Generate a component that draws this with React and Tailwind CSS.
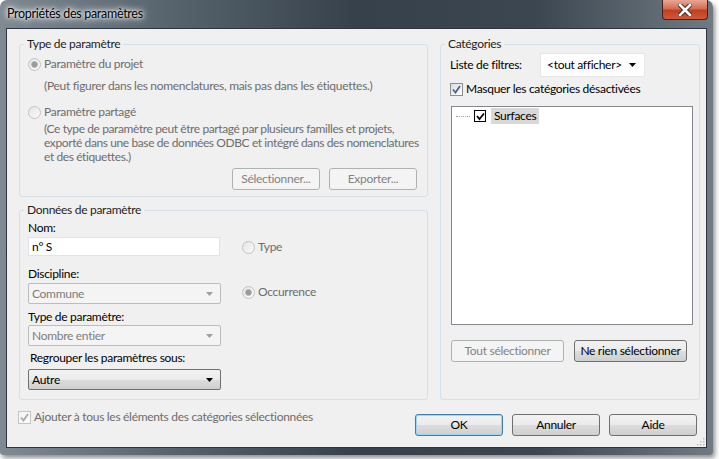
import React from 'react';

const font = "font-['Lato',sans-serif] text-[12px] tracking-[-0.3px] whitespace-nowrap";

function Radio({ checked }) {
    return (
        <svg width="13" height="13" viewBox="0 0 13 13" className="shrink-0">
            <defs>
                <linearGradient id="rg" x1="0" y1="0" x2="1" y2="1">
                    <stop offset="0" stopColor="#e4e4e4" />
                    <stop offset="1" stopColor="#fbfbfb" />
                </linearGradient>
            </defs>
            <circle cx="6.5" cy="6.5" r="6" fill="url(#rg)" stroke="#c2c2c2" />
            {checked && <circle cx="6.5" cy="6.5" r="3" fill="#9a9a9a" stroke="#b0b0b0" strokeWidth="0.6" />}
        </svg>
    );
}

function Check({ disabled }) {
    return (
        <span className={`w-[13px] h-[13px] shrink-0 border flex items-center justify-center bg-gradient-to-br ${disabled ? 'border-[#c4c4c4] from-[#f4f4f4] to-[#fbfbfb]' : 'border-[#8e8f8f] from-[#dcdcdc] to-[#ffffff]'}`}>
            <svg width="9" height="9" viewBox="0 0 9 9">
                <path d="M1 4.5 L3.5 7.5 L8 1" fill="none" stroke={disabled ? '#a8a8a8' : '#4a6294'} strokeWidth="1.8" />
            </svg>
        </span>
    );
}

function Arrow({ color }) {
    return (
        <svg width="7" height="4" viewBox="0 0 7 4" className="shrink-0">
            <path d="M0 0 H7 L3.5 4 Z" fill={color} />
        </svg>
    );
}

function Button({ children, w, disabled, focused }) {
    return (
        <div
            className={`h-[22px] ${w} rounded-[3px] border flex items-center justify-center ${
                disabled
                    ? 'border-[#adb2b5] bg-[#f4f4f4] text-[#838383]'
                    : focused
                    ? 'border-[#3c7fb1] bg-[linear-gradient(#f2f2f2_0%,#ebebeb_50%,#dddddd_50%,#cfcfcf_100%)] shadow-[inset_0_0_0_1px_#9ed4f5] text-black'
                    : 'border-[#707070] bg-[linear-gradient(#f2f2f2_0%,#ebebeb_50%,#dddddd_50%,#cfcfcf_100%)] text-black'
            }`}
        >
            {children}
        </div>
    );
}

function Select({ value, disabled }) {
    return (
        <div
            className={`w-[193px] h-[21px] rounded-[2px] border flex items-center justify-between pl-[3px] pr-[7px] ${
                disabled
                    ? 'border-[#bcbcbc] bg-[#f4f4f4] text-[#7d7d7d]'
                    : 'border-[#707070] bg-[linear-gradient(#f2f2f2_0%,#ebebeb_50%,#dddddd_50%,#cfcfcf_100%)] text-black'
            }`}
        >
            <span>{value}</span>
            <Arrow color={disabled ? '#a0a0a0' : '#000'} />
        </div>
    );
}

function Group({ title, className, children }) {
    return (
        <fieldset className={`min-w-0 border border-[#d5dfe5] rounded-[3px] ${className}`}>
            <legend className="ml-[4px] px-[3px] leading-[16px] text-[#1e1e1e]">{title}</legend>
            {children}
        </fieldset>
    );
}

export default function App() {
    return (
        <div className={`w-[719px] h-[459px] bg-white ${font}`}>
            <div className="w-[713px] h-[455px] rounded-t-[7px] rounded-b-[3px] bg-[linear-gradient(90deg,#7f8a93_0%,#55616b_25%,#36414b_50%,#3b4650_75%,#6f7a83_100%)] shadow-[2px_3px_5px_rgba(0,0,0,0.45)] flex flex-col">
                {/* Title bar */}
                <div className="h-[28px] flex items-start justify-between pl-[7px] pr-[5px]">
                    <span className="mt-[6px] text-[12.5px] leading-[16px] text-black [text-shadow:0_0_6px_#fff,0_0_10px_#fff,0_0_3px_#fff]">
                        Propriétés des paramètres
                    </span>
                    <div className="w-[46px] h-[20px] rounded-b-[4px] border border-t-0 border-[#4a2018] bg-[linear-gradient(#e9a795_0%,#d46c55_45%,#c0401f_55%,#d2583a_100%)] flex items-center justify-center">
                        <svg width="14" height="12" viewBox="0 0 14 12">
                            <path d="M2 1 L12 11 M12 1 L2 11" stroke="#3a2a2a" strokeWidth="4.5" strokeLinecap="square" />
                            <path d="M2 1 L12 11 M12 1 L2 11" stroke="#fff" strokeWidth="2.6" strokeLinecap="square" />
                        </svg>
                    </div>
                </div>

                {/* Client area */}
                <div className="mx-[6px] w-[701px] h-[420px] border border-[#2c3640] bg-[#f0f0f0] pl-[12px] pr-[6px] pt-[7px] relative">
                    <div className="flex gap-[12px]">
                        {/* Left column */}
                        <div className="w-[409px] flex flex-col gap-[5px]">
                            <Group title="Type de paramètre" className="h-[161px]">
                                <div className="mt-[4px] pl-[8px] h-[16px] flex items-center gap-[3px] text-[#6d6d6d]">
                                    <Radio checked />
                                    <span>Paramètre du projet</span>
                                </div>
                                <div className="mt-[6px] pl-[24px] leading-[16px] text-[#6d6d6d]">
                                    (Peut figurer dans les nomenclatures, mais pas dans les étiquettes.)
                                </div>
                                <div className="mt-[10px] pl-[8px] h-[16px] flex items-center gap-[3px] text-[#6d6d6d]">
                                    <Radio />
                                    <span>Paramètre partagé</span>
                                </div>
                                <div className="mt-[2px] pl-[24px] leading-[14px] tracking-[-0.4px] text-[#6d6d6d]">
                                    <div>(Ce type de paramètre peut être partagé par plusieurs familles et projets,</div>
                                    <div>exporté dans une base de données ODBC et intégré dans des nomenclatures</div>
                                    <div>et des étiquettes.)</div>
                                </div>
                                <div className="mt-[4px] pr-[10px] flex justify-end gap-[9px]">
                                    <Button w="w-[88px]" disabled>Sélectionner...</Button>
                                    <Button w="w-[88px]" disabled>Exporter...</Button>
                                </div>
                            </Group>

                            <Group title="Données de paramètre" className="h-[198px]">
                                <div className="flex">
                                    <div className="pl-[8px] w-[222px] flex flex-col">
                                        <div className="mt-[2px] leading-[16px]">Nom:</div>
                                        <div className="mt-[1px] w-[192px] h-[19px] bg-white border border-[#e2e3ea] flex items-center pl-[3px] text-black">
                                            n° S
                                        </div>
                                        <div className="mt-[10px] leading-[16px]">Discipline:</div>
                                        <div className="mt-[1px]">
                                            <Select value="Commune" disabled />
                                        </div>
                                        <div className="mt-[5px] leading-[16px]">Type de paramètre:</div>
                                        <Select value="Nombre entier" disabled />
                                        <div className="mt-[4px] pl-[2px] leading-[16px]">Regrouper les paramètres sous:</div>
                                        <div className="mt-[3px]">
                                            <Select value="Autre" />
                                        </div>
                                    </div>
                                    <div className="flex flex-col">
                                        <div className="mt-[21px] h-[16px] flex items-center gap-[3px] text-[#6d6d6d]">
                                            <Radio />
                                            <span>Type</span>
                                        </div>
                                        <div className="mt-[29px] h-[16px] flex items-center gap-[3px] text-[#6d6d6d]">
                                            <Radio checked />
                                            <span>Occurrence</span>
                                        </div>
                                    </div>
                                </div>
                            </Group>
                        </div>

                        {/* Right column */}
                        <Group title="Catégories" className="w-[260px] h-[364px]">
                            <div className="mt-[1px] pl-[9px] h-[24px] flex items-center">
                                <span className="w-[90px]">Liste de filtres:</span>
                                <div className="w-[105px] h-[24px] bg-white border border-[#e6e6e6] flex items-center justify-between pl-[6px] pr-[8px]">
                                    <span>&lt;tout afficher&gt;</span>
                                    <Arrow color="#000" />
                                </div>
                            </div>
                            <div className="mt-[4px] pl-[9px] h-[16px] flex items-center gap-[3px]">
                                <Check />
                                <span>Masquer les catégories désactivées</span>
                            </div>
                            <div className="mt-[9px] ml-[10px] w-[242px] h-[219px] bg-white border border-[#828790] pt-[1px]">
                                <div className="flex items-center h-[16px] pl-[4px]">
                                    <span className="w-[14px] border-t border-dotted border-[#a0a0a0] mr-[4px]" />
                                    <span className="w-[12px] h-[12px] border border-black bg-white flex items-center justify-center">
                                        <svg width="9" height="9" viewBox="0 0 9 9">
                                            <path d="M1 4 L3.5 7 L8 1.5" fill="none" stroke="#000" strokeWidth="1.8" />
                                        </svg>
                                    </span>
                                    <span className="ml-[5px] px-[3px] h-[16px] leading-[16px] bg-[#d9d9d9]">Surfaces</span>
                                </div>
                            </div>
                            <div className="mt-[15px] ml-[10px] flex gap-[10px]">
                                <Button w="w-[113px]" disabled>Tout sélectionner</Button>
                                <Button w="w-[113px]">Ne rien sélectionner</Button>
                            </div>
                        </Group>
                    </div>

                    {/* Bottom row */}
                    <div className="flex justify-between pr-[3px]">
                        <div className="mt-[9px] -ml-[1px] h-[16px] flex items-center gap-[3px] text-[#6d6d6d]">
                            <Check disabled />
                            <span>Ajouter à tous les éléments des catégories sélectionnées</span>
                        </div>
                        <div className="mt-[14px] flex gap-[9px]">
                            <Button w="w-[88px]" focused>OK</Button>
                            <Button w="w-[88px]">Annuler</Button>
                            <Button w="w-[88px]">Aide</Button>
                        </div>
                    </div>

                    {/* size grip */}
                    <svg width="8" height="8" viewBox="0 0 8 8" className="absolute right-[1px] bottom-[1px]">
                        <g fill="#b8b8b8">
                            <rect x="6" y="0" width="1.4" height="1.4" />
                            <rect x="3" y="3" width="1.4" height="1.4" />
                            <rect x="6" y="3" width="1.4" height="1.4" />
                            <rect x="0" y="6" width="1.4" height="1.4" />
                            <rect x="3" y="6" width="1.4" height="1.4" />
                            <rect x="6" y="6" width="1.4" height="1.4" />
                        </g>
                    </svg>
                </div>
            </div>
        </div>
    );
}
